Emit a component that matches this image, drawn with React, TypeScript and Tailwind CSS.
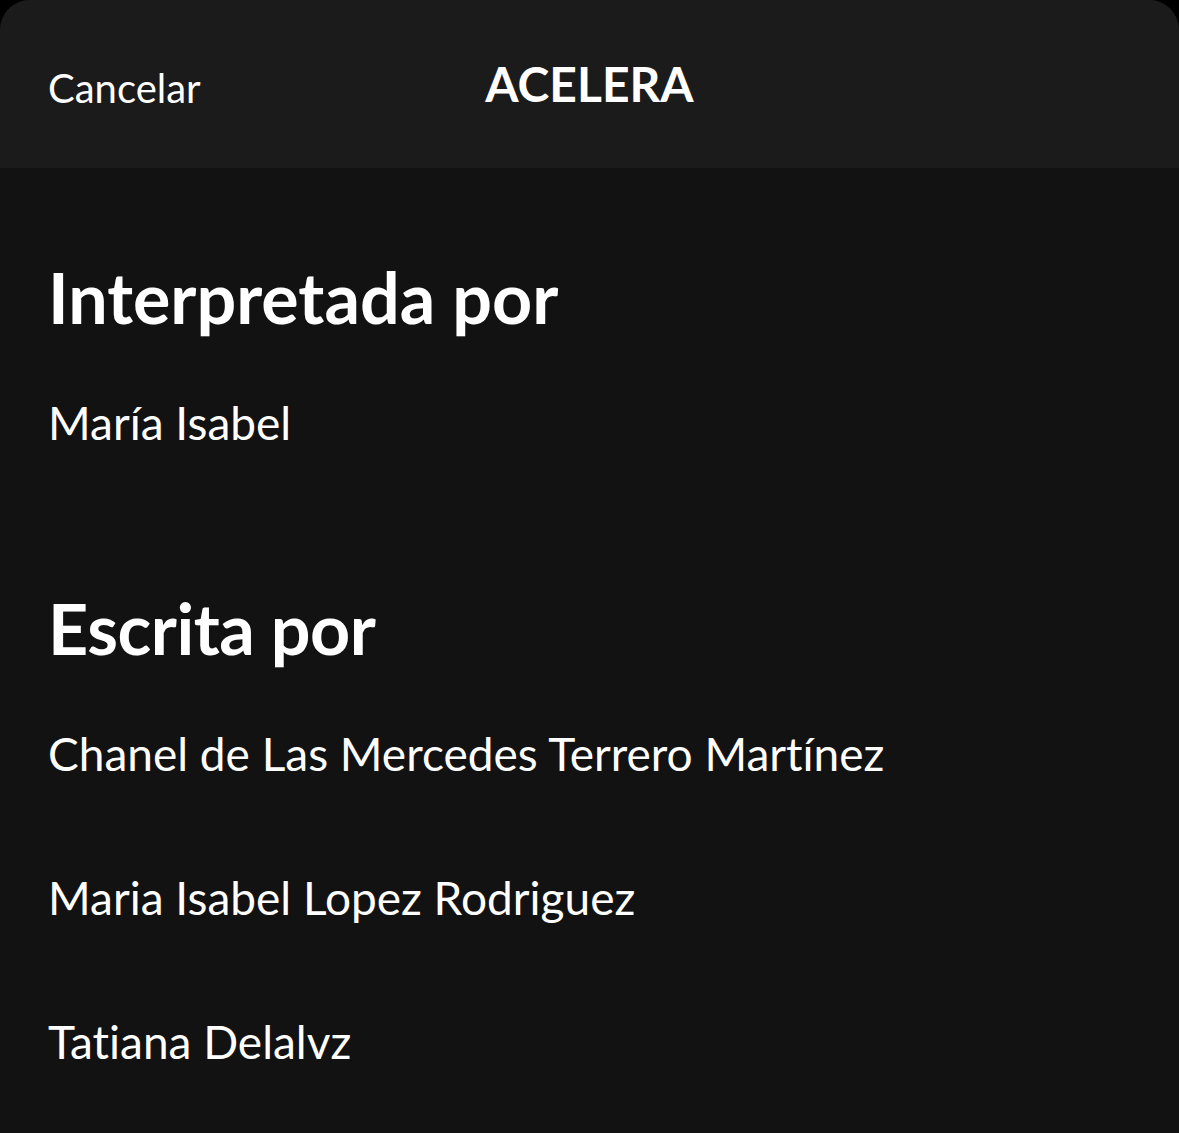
export default function App() {
  const writers = [
    "Chanel de Las Mercedes Terrero Martínez",
    "Maria Isabel Lopez Rodriguez",
    "Tatiana Delalvz",
  ];

  return (
    <div
      className="h-[1133px] w-[1179px] overflow-hidden bg-black text-white [font-variant-ligatures:none]"
      style={{ fontFamily: "Lato, 'Noto Sans', sans-serif" }}
    >
      <div className="h-full rounded-t-[30px] bg-[#121212] overflow-hidden">
        <header className="relative flex h-[168px] items-center bg-[#1b1b1b] px-[48px]">
          <button className="text-[40px] leading-none text-white pt-[8px]">Cancelar</button>
          <h1 className="absolute left-1/2 top-[60px] -translate-x-1/2 text-[48px] font-bold leading-none">
            ACELERA
          </h1>
        </header>

        <main className="px-[48px]">
          <section className="pt-[89px]">
            <h2 className="text-[70px] font-bold leading-[80px]">Interpretada por</h2>
            <p className="mt-[58px] text-[46px] leading-[56px]">María Isabel</p>
          </section>

          <section className="pt-[137px]">
            <h2 className="text-[70px] font-bold leading-[80px] tracking-[-0.5px]">Escrita por</h2>
            <div className="mt-[58px] flex flex-col gap-[88px]">
              {writers.map((name) => (
                <p key={name} className="text-[46px] leading-[56px]">
                  {name}
                </p>
              ))}
            </div>
          </section>
        </main>
      </div>
    </div>
  );
}
